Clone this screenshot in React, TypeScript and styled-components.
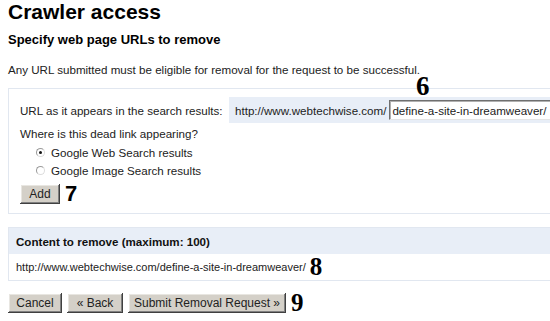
import React from 'react'
import styled, { createGlobalStyle } from 'styled-components'

const GlobalStyle = createGlobalStyle`
  html, body {
    margin: 0;
    background: #fff;
    overflow: hidden;
  }
  body {
    font-family: "Liberation Sans", Arial, sans-serif;
    color: #222;
  }
`

const Page = styled.div`
  position: relative;
  width: 640px;
  padding-left: 8px;
`

const Title = styled.h1`
  margin: 0;
  font-size: 21px;
  line-height: 24px;
  font-weight: bold;
  color: #000;
`

const Subtitle = styled.h2`
  margin: 8px 0 0;
  font-size: 13px;
  line-height: 16px;
  font-weight: bold;
  color: #000;
`

const Intro = styled.p`
  margin: 14px 0 0;
  font-size: 11.6px;
  line-height: 15px;
`

const Panel = styled.div<{ $gap: number }>`
  margin-top: ${(p) => p.$gap}px;
  border: 1px solid #e1e7f0;
  font-size: 11.6px;
`

const FormBody = styled.div`
  padding: 8px 0 9px 11px;
`

const UrlRow = styled.div`
  display: flex;
  align-items: center;
  height: 26px;
`

const UrlLabel = styled.span`
  width: 209px;
  flex: none;
  white-space: nowrap;
`

const UrlField = styled.div`
  flex: 1;
  height: 100%;
  display: flex;
  align-items: center;
  gap: 3px;
  padding-left: 6px;
  background: #e8eef7;
  white-space: nowrap;
`

const UrlInput = styled.input`
  box-sizing: border-box;
  width: 240px;
  height: 20px;
  padding: 0 2px;
  font: 11.6px "Liberation Sans", Arial, sans-serif;
  color: #222;
  background: #fff;
  border: 1px solid;
  border-color: #6f6f6f #e4e4e4 #e4e4e4 #6f6f6f;
  box-shadow: inset 1px 1px 0 #b0b0b0;
  outline: none;
`

const Question = styled.div`
  margin-top: 3px;
  line-height: 15px;
`

const RadioList = styled.div`
  margin-top: 2px;
  padding-left: 16px;
`

const RadioRow = styled.label`
  display: flex;
  align-items: center;
  gap: 6px;
  height: 18px;
`

const RadioMark = styled.span<{ $checked?: boolean }>`
  position: relative;
  box-sizing: border-box;
  width: 9px;
  height: 9px;
  border-radius: 50%;
  border: 1px solid #9a9a9a;
  border-right-color: #dcdcdc;
  border-bottom-color: #dcdcdc;
  background: #fff;

  &::after {
    content: '';
    display: ${(p) => (p.$checked ? 'block' : 'none')};
    position: absolute;
    left: 2px;
    top: 2px;
    width: 3px;
    height: 3px;
    border-radius: 50%;
    background: #111;
  }
`

const ButtonRow = styled.div<{ $gap: number; $top: number }>`
  display: flex;
  align-items: center;
  gap: ${(p) => p.$gap}px;
  margin-top: ${(p) => p.$top}px;
`

const Button = styled.button<{ $w: number }>`
  box-sizing: border-box;
  width: ${(p) => p.$w}px;
  height: 20px;
  padding: 0;
  font: 12px "Liberation Sans", Arial, sans-serif;
  color: #222;
  background: #d4d0c8;
  border: none;
  box-shadow: inset -1px -1px 0 #404040, inset 1px 1px 0 #fff,
    inset -2px -2px 0 #808080, inset 2px 2px 0 #e8e6e1;
`

const SansMark = styled.span`
  font-family: "Liberation Sans", Arial, sans-serif;
  font-weight: bold;
  font-size: 22px;
  line-height: 20px;
  color: #000;
`

const SerifMark = styled.span`
  font-family: "Liberation Serif", "Times New Roman", serif;
  font-weight: bold;
  font-size: 25px;
  line-height: 20px;
  color: #000;
`

const FloatingMark = styled(SerifMark)`
  position: absolute;
  left: 416px;
  top: 73px;
  font-size: 27px;
  line-height: 27px;
`

const ListHeader = styled.div`
  display: flex;
  align-items: center;
  height: 26px;
  padding-left: 7px;
  background: #e8eef7;
  font-weight: bold;
  color: #111;
`

const ListRow = styled.div`
  display: flex;
  align-items: center;
  gap: 4px;
  height: 26px;
  padding-left: 7px;
  font-size: 11px;
`

export default function App() {
  return (
    <Page>
      <GlobalStyle />
      <Title>Crawler access</Title>
      <Subtitle>Specify web page URLs to remove</Subtitle>
      <Intro>Any URL submitted must be eligible for removal for the request to be successful.</Intro>

      <Panel $gap={11}>
        <FormBody>
          <UrlRow>
            <UrlLabel>URL as it appears in the search results:</UrlLabel>
            <UrlField>
              <span>http://www.webtechwise.com/</span>
              <UrlInput defaultValue="define-a-site-in-dreamweaver/" />
            </UrlField>
          </UrlRow>
          <Question>Where is this dead link appearing?</Question>
          <RadioList>
            <RadioRow>
              <RadioMark $checked />
              Google Web Search results
            </RadioRow>
            <RadioRow>
              <RadioMark />
              Google Image Search results
            </RadioRow>
          </RadioList>
          <ButtonRow $gap={5} $top={5}>
            <Button $w={40}>Add</Button>
            <SansMark>7</SansMark>
          </ButtonRow>
        </FormBody>
      </Panel>
      <FloatingMark>6</FloatingMark>

      <Panel $gap={13}>
        <ListHeader>Content to remove (maximum: 100)</ListHeader>
        <ListRow>
          <span>http://www.webtechwise.com/define-a-site-in-dreamweaver/</span>
          <SerifMark>8</SerifMark>
        </ListRow>
      </Panel>

      <ButtonRow $gap={5} $top={12}>
        <Button $w={54}>Cancel</Button>
        <Button $w={56}>« Back</Button>
        <Button $w={158}>Submit Removal Request »</Button>
        <SerifMark>9</SerifMark>
      </ButtonRow>
    </Page>
  )
}
